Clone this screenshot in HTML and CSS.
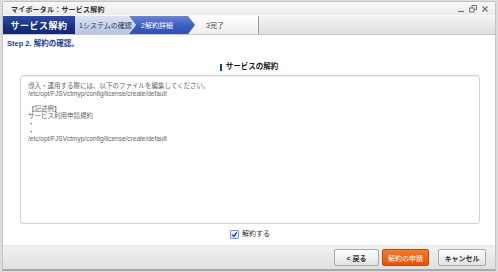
FILE: index.html
```html
<!DOCTYPE html>
<html lang="ja">
<head>
<meta charset="utf-8">
<title>マイポータル：サービス解約</title>
<link rel="stylesheet" href="styles.css">
</head>
<body>
<div class="window">
  <div class="titlebar">
    <span class="title">マイポータル：サービス解約</span>
    <span class="winicons">
      <svg width="8" height="8" viewBox="0 0 8 8"><path d="M1 6.5h6" stroke="#777" stroke-width="1.2"/></svg>
      <svg width="8" height="8" viewBox="0 0 8 8"><rect x="3" y="0.5" width="4.5" height="4" fill="none" stroke="#777" stroke-width="1"/><rect x="0.5" y="3" width="4.5" height="4" fill="#eee" stroke="#777" stroke-width="1"/></svg>
      <svg width="8" height="8" viewBox="0 0 8 8"><path d="M1.5 1.5l5 5M6.5 1.5l-5 5" stroke="#777" stroke-width="1.3"/></svg>
    </span>
  </div>
  <div class="tabbar">
    <div class="maintab">サービス解約</div>
    <div class="steps">
      <div class="step step1">1システムの確認</div>
      <div class="step step2">2解約詳細</div>
      <div class="step step3">3完了</div>
    </div>
  </div>
  <div class="content">
    <div class="steptitle">Step 2. 解約の確認。</div>
    <div class="section">
      <h2 class="sechead"><span class="bar"></span>サービスの解約</h2>
      <div class="textbox">導入・運用する際には、以下のファイルを編集してください。
/etc/opt/FJSVctmyp/config/license/create/default

【記述例】
サービス利用申請規約
・
・
/etc/opt/FJSVctmyp/config/license/create/default</div>
      <label class="agree">
        <span class="cbox"><svg width="9" height="9" viewBox="0 0 9 9"><path d="M1.8 4.6l2 2.2 3.6-5" fill="none" stroke="#1b2f6e" stroke-width="1.6"/></svg></span>
        解約する
      </label>
    </div>
  </div>
  <div class="footer">
    <button class="btn">&lt; 戻る</button>
    <button class="btn primary">解約の申請</button>
    <button class="btn cancel">キャンセル</button>
  </div>
</div>
</body>
</html>
```

FILE: styles.css
```css
* { box-sizing: border-box; }
html, body { margin: 0; padding: 0; }
body {
  width: 498px;
  height: 272px;
  background: #dcdcdc;
  font-family: "Liberation Sans", "Noto Sans CJK JP", sans-serif;
  overflow: hidden;
  padding: 1px 2px 0 2px;
}
.window {
  width: 494px;
  height: 270px;
  background: #fff;
  border: 1px solid #c4c4c4;
  border-bottom: 2px solid #a8a8a8;
  border-radius: 3px 3px 0 0;
  display: flex;
  flex-direction: column;
}
.titlebar {
  height: 13px;
  background: linear-gradient(#f7f7f7, #ececec);
  display: flex;
  align-items: center;
  justify-content: space-between;
  padding: 0 6px 0 8px;
}
.title {
  font-size: 7px;
  font-weight: bold;
  color: #333;
  letter-spacing: 0.2px;
}
.winicons { display: flex; gap: 4px; align-items: center; }
.winicons svg { display: block; }
.tabbar {
  height: 20px;
  display: flex;
  background: linear-gradient(#f4f4f4, #dedede);
  border-top: 1px solid #fafafa;
  border-bottom: 1px solid #c8c8c8;
}
.maintab {
  width: 72px;
  background: linear-gradient(#2e4ea8, #16307f 60%, #132a73);
  color: #fff;
  font-size: 9px;
  font-weight: bold;
  display: flex;
  align-items: center;
  justify-content: center;
  letter-spacing: 0.5px;
}
.steps {
  display: flex;
  height: 100%;
}
.step {
  height: 100%;
  display: flex;
  align-items: center;
  font-size: 7px;
  padding-left: 4px;
}
.step1 {
  width: 60px;
  background: linear-gradient(#dbe3f3, #b6c4e2);
  color: #2c3a5e;
  clip-path: polygon(0 0, calc(100% - 7px) 0, 100% 50%, calc(100% - 7px) 100%, 0 100%);
}
.step2 {
  width: 66px;
  margin-left: -6px;
  padding-left: 12px;
  background: linear-gradient(#6a86d6, #3b5cc0 55%, #2f4fb2);
  color: #fff;
  clip-path: polygon(0 0, calc(100% - 7px) 0, 100% 50%, calc(100% - 7px) 100%, 0 100%, 7px 50%);
}
.step3 {
  width: 70px;
  margin-left: -6px;
  padding-left: 17px;
  background: linear-gradient(#ffffff, #eeeeee);
  color: #444;
  border-right: 1px solid #9a9a9a;
  clip-path: polygon(0 0, 100% 0, 100% 100%, 0 100%, 7px 50%);
}
.content {
  flex: 1;
  display: flex;
  flex-direction: column;
}
.steptitle {
  font-size: 7.5px;
  font-weight: bold;
  color: #1d3d94;
  padding: 4px 0 0 4px;
  line-height: 10px;
}
.section {
  display: flex;
  flex-direction: column;
  align-items: center;
  padding: 0 16px 0 16px;
}
.sechead {
  margin: 13px 0 0 0;
  font-size: 7.5px;
  font-weight: bold;
  color: #222;
  display: flex;
  align-items: center;
  gap: 4px;
  line-height: 10px;
}
.bar {
  width: 2px;
  height: 7px;
  background: #1d3d94;
}
.textbox {
  margin-top: 3px;
  width: 460px;
  height: 149px;
  border: 1px solid #d2d2d2;
  border-radius: 3px;
  box-shadow: inset 0 1px 1px #eee;
  padding: 6px 0 0 7px;
  font-size: 6.5px;
  line-height: 7.6px;
  color: #666;
  white-space: pre-wrap;
  align-self: flex-start;
  margin-left: 1px;
}
.agree {
  margin-top: 5px;
  display: flex;
  align-items: center;
  gap: 3px;
  font-size: 7px;
  color: #333;
  line-height: 10px;
  margin-left: 2px;
}
.cbox {
  width: 9px;
  height: 9px;
  border: 1px solid #6d9ad8;
  background: linear-gradient(#f4f8ff, #cfdff5);
  display: flex;
  align-items: center;
  justify-content: center;
  border-radius: 1px;
}
.cbox svg { display: block; }
.footer {
  height: 24px;
  background: linear-gradient(#f1f1f1, #e0e0e0);
  border-top: 1px solid #e6e6e6;
  display: flex;
  justify-content: flex-end;
  align-items: center;
  gap: 0;
  padding-right: 9px;
}
.btn {
  height: 17px;
  font-family: inherit;
  font-size: 7px;
  font-weight: bold;
  color: #333;
  background: linear-gradient(#fefefe, #e2e2e2);
  border: 1px solid #a9a9a9;
  border-radius: 2px;
  padding: 0;
  width: 45px;
  margin-left: 3px;
  display: flex;
  align-items: center;
  justify-content: center;
}
.primary {
  width: 47px;
  background: linear-gradient(#f57a2a, #e2520c);
  border-color: #c8480c;
  color: #fff;
  font-weight: normal;
}
.cancel {
  width: 48px;
  margin-left: 9px;
}
```
